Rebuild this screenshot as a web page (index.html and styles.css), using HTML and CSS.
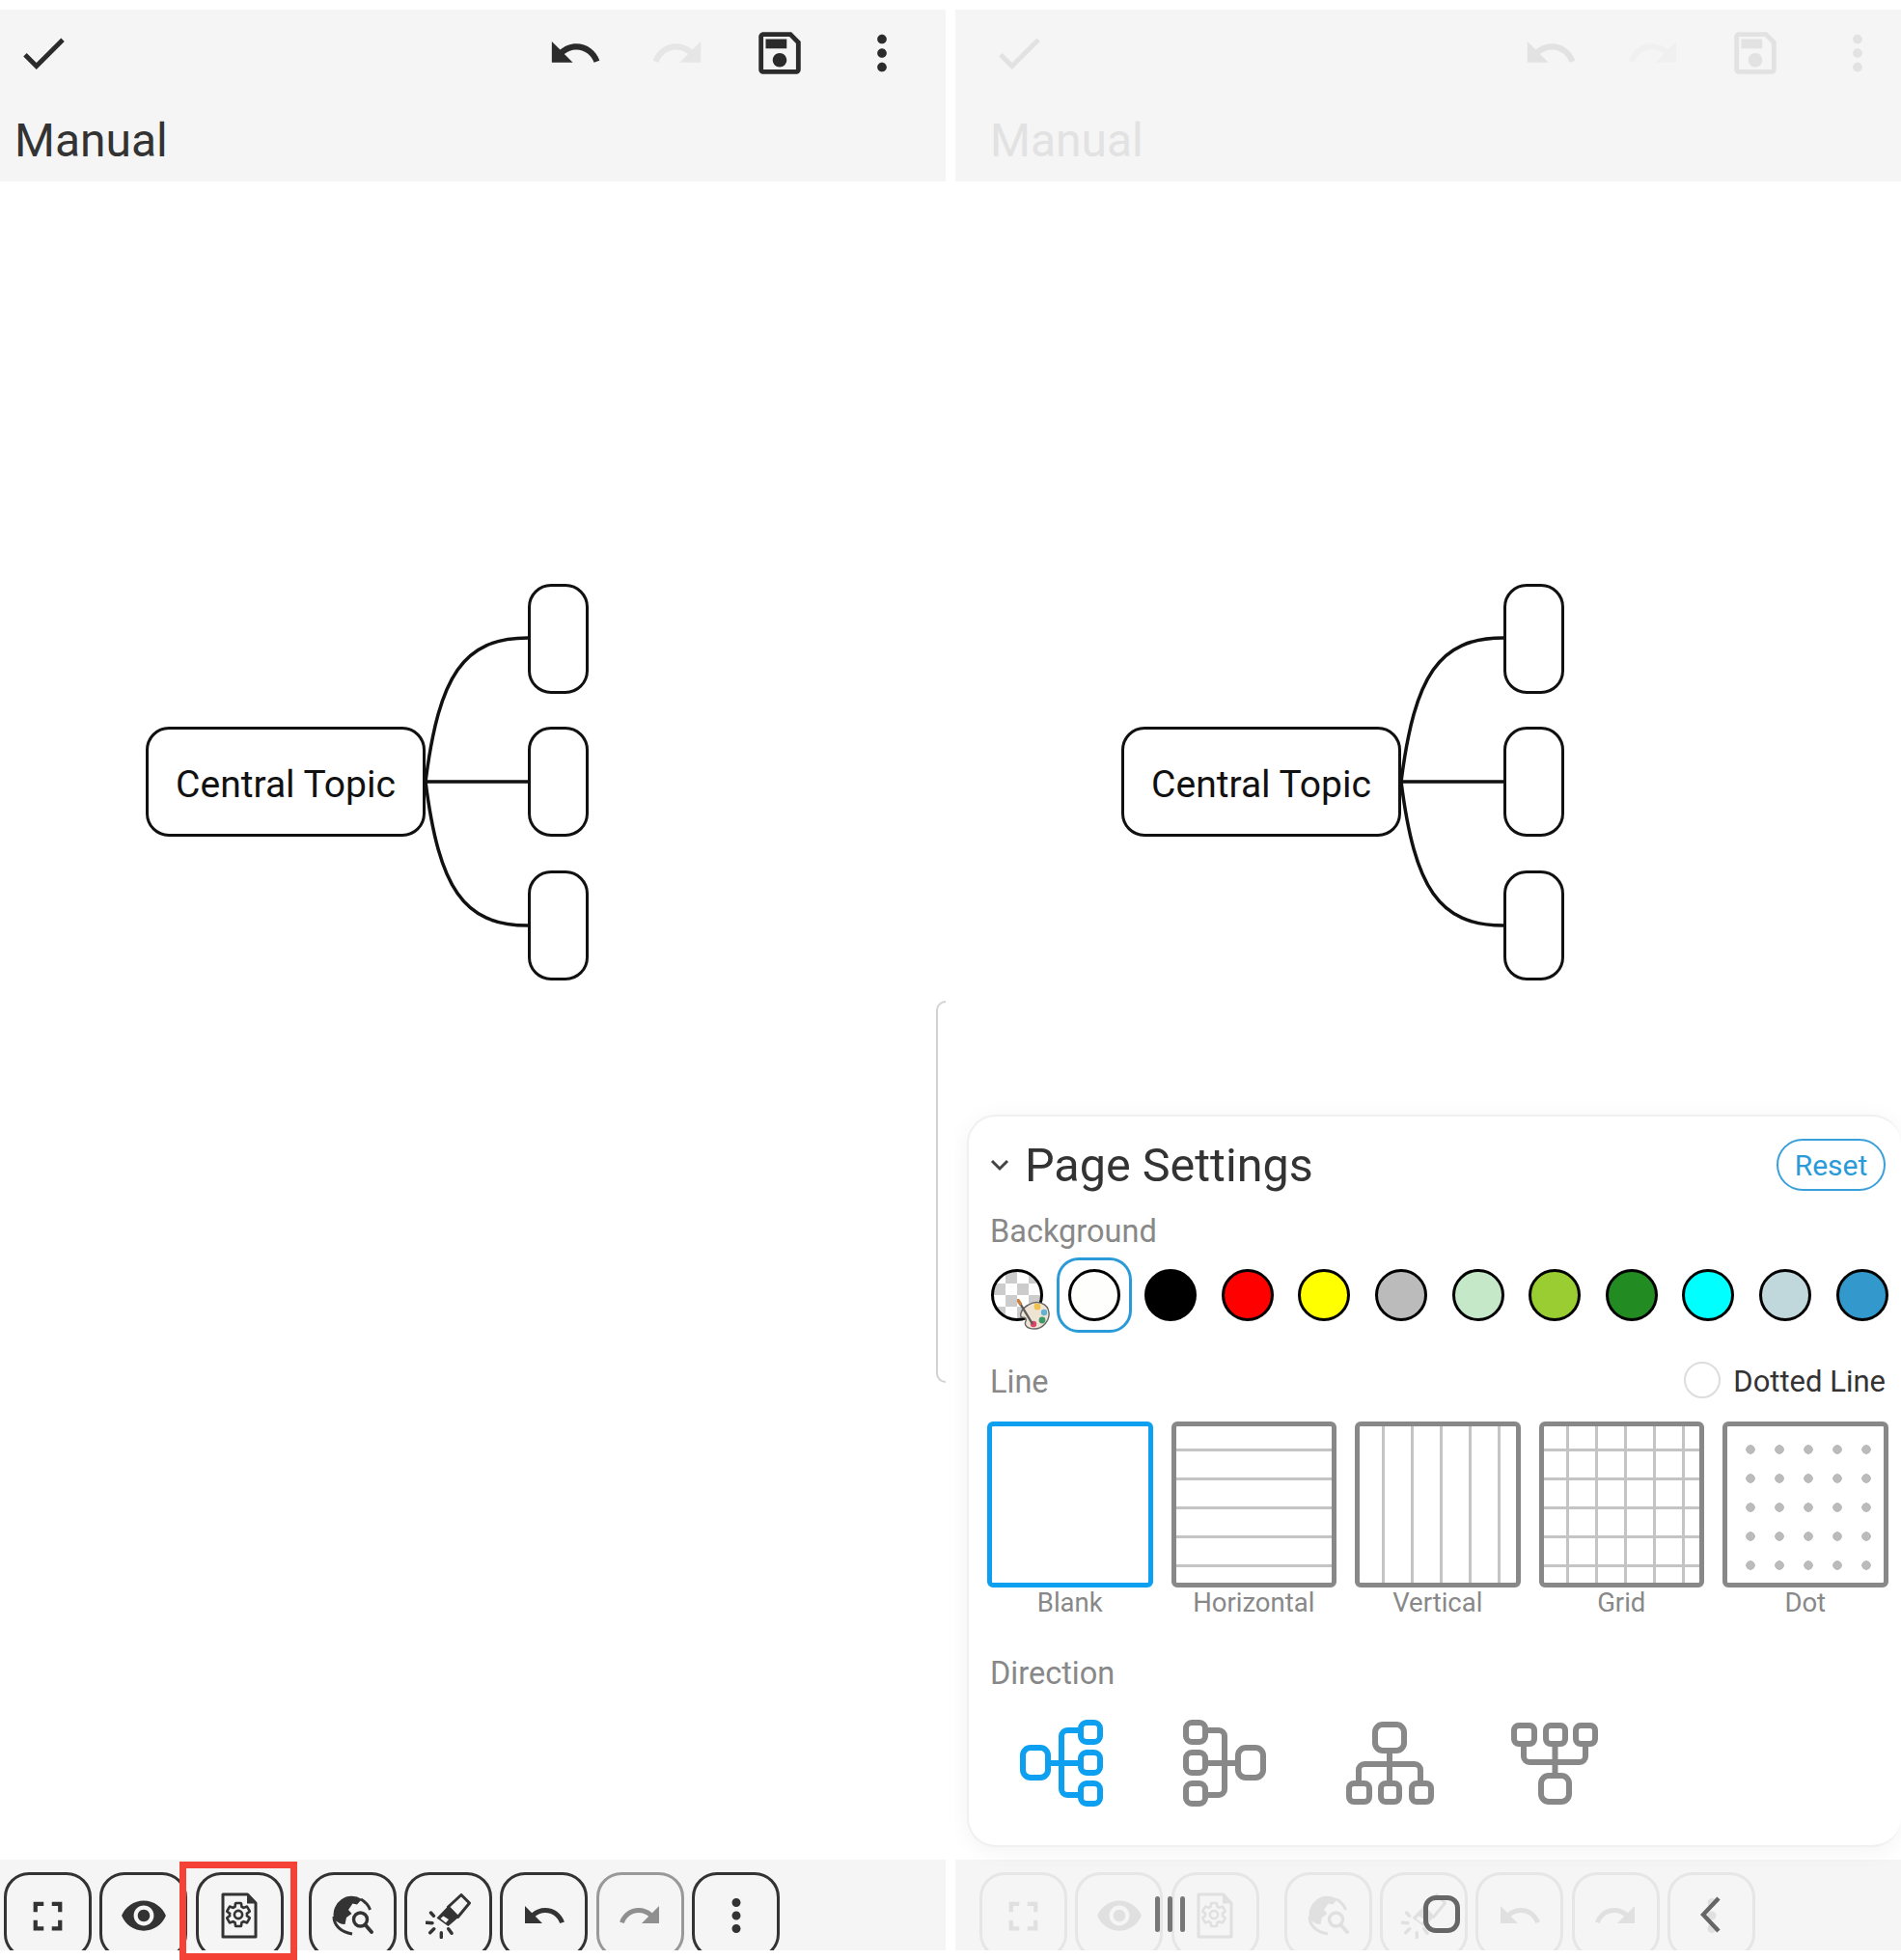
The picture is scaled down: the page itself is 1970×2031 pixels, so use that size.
FILE: index.html
```html
<!DOCTYPE html>
<html lang="en">
<head>
    <meta charset="UTF-8">
    <title>Manual - Page Settings</title>
    <link rel="stylesheet" href="styles.css">
</head>
<body>
    <!-- shared icons -->
    <svg class="sprite" xmlns="http://www.w3.org/2000/svg">
        <symbol id="i-check" viewBox="0 0 24 24"><path d="M9 16.17L4.83 12l-1.42 1.41L9 19 21 7l-1.41-1.41z"/></symbol>
        <symbol id="i-undo" viewBox="0 0 24 24"><path d="M12.5 8c-2.65 0-5.05.99-6.9 2.6L2 7v9h9l-3.62-3.62c1.39-1.16 3.16-1.88 5.12-1.88 3.54 0 6.55 2.31 7.6 5.5l2.37-.78C21.08 11.03 17.15 8 12.5 8z"/></symbol>
        <symbol id="i-redo" viewBox="0 0 24 24"><path d="M18.4 10.6C16.55 8.99 14.15 8 11.5 8c-4.65 0-8.58 3.03-9.96 7.22L3.9 16c1.05-3.19 4.05-5.5 7.6-5.5 1.95 0 3.73.72 5.12 1.88L13 16h9V7z"/></symbol>
        <symbol id="i-save" viewBox="0 0 24 24"><path d="M17 3H5c-1.11 0-2 .9-2 2v14c0 1.1.89 2 2 2h14c1.1 0 2-.9 2-2V7l-4-4zm2 16H5V5h11.17L19 7.83V19zm-7-7c-1.66 0-3 1.34-3 3s1.34 3 3 3 3-1.34 3-3-1.34-3-3-3zM6 6h9v4H6z"/></symbol>
        <symbol id="i-more" viewBox="0 0 24 24"><path d="M12 8c1.1 0 2-.9 2-2s-.9-2-2-2-2 .9-2 2 .9 2 2 2zm0 2c-1.1 0-2 .9-2 2s.9 2 2 2 2-.9 2-2-.9-2-2-2zm0 6c-1.1 0-2 .9-2 2s.9 2 2 2 2-.9 2-2-.9-2-2-2z"/></symbol>
        <symbol id="i-full" viewBox="0 0 24 24"><path d="M7 14H5v5h5v-2H7v-3zm-2-4h2V7h3V5H5v5zm12 7h-3v2h5v-5h-2v3zM14 5v2h3v3h2V5h-5z"/></symbol>
        <symbol id="i-eye" viewBox="0 0 24 24"><path d="M12 4.5C7 4.5 2.73 7.61 1 12c1.73 4.39 6 7.5 11 7.5s9.27-3.11 11-7.5c-1.73-4.39-6-7.5-11-7.5zM12 17c-2.76 0-5-2.24-5-5s2.24-5 5-5 5 2.24 5 5-2.24 5-5 5zm0-8c-1.66 0-3 1.34-3 3s1.34 3 3 3 3-1.34 3-3-1.34-3-3-3z"/></symbol>
        <symbol id="i-doc" viewBox="0 0 38 48">
            <path d="M2 2H27.5L36 11V46H2z" fill="none" stroke="currentColor" stroke-width="3" stroke-linejoin="round"/>
            <path d="M27 3V11.5H35z"/>
            <g transform="translate(3.6 8.6) scale(1.2)" fill="none" stroke="currentColor" stroke-width="2.2">
                <path d="M19.43 12.98c.04-.32.07-.64.07-.98s-.03-.66-.07-.98l2.11-1.65c.19-.15.24-.42.12-.64l-2-3.46c-.12-.22-.39-.3-.61-.22l-2.49 1c-.52-.4-1.08-.73-1.69-.98l-.38-2.65C14.46 2.18 14.25 2 14 2h-4c-.25 0-.46.18-.49.42l-.38 2.65c-.61.25-1.17.59-1.69.98l-2.49-1c-.23-.09-.49 0-.61.22l-2 3.46c-.13.22-.07.49.12.64l2.11 1.65c-.04.32-.07.65-.07.98s.03.66.07.98l-2.11 1.65c-.19.15-.24.42-.12.64l2 3.46c.12.22.39.3.61.22l2.49-1c.52.4 1.08.73 1.69.98l.38 2.65c.03.24.24.42.49.42h4c.25 0 .46-.18.49-.42l.38-2.65c.61-.25 1.17-.59 1.69-.98l2.49 1c.23.09.49 0 .61-.22l2-3.46c.12-.22.07-.49-.12-.64l-2.11-1.65z"/>
                <circle cx="12" cy="12" r="3.4"/>
            </g>
        </symbol>
        <symbol id="i-globe" viewBox="0 0 43 42">
            <path d="M2 24A19 19 0 0 1 31 4L26 9.500 21.500 8.500 17 15 20.500 19 15 23 13.500 30C9 30 5 28 2 24z"/>
            <path d="M2 22C2 31 9 38 21 40" fill="none" stroke="currentColor" stroke-width="3"/>
            <path d="M30 4C35 7 38 10 39.500 15" fill="none" stroke="currentColor" stroke-width="3"/>
            <circle cx="29.500" cy="25" r="7" fill="none" stroke="currentColor" stroke-width="3.400"/>
            <path d="M34.500 30.500L41 38" stroke="currentColor" stroke-width="3.800" stroke-linecap="round"/>
        </symbol>
        <symbol id="i-brush" viewBox="-1 0 47 47">
            <path d="M36 1.500L44.500 10L32.500 24.500L22.500 14z" fill="none" stroke="currentColor" stroke-width="3" stroke-linejoin="round"/>
            <path d="M22.500 13L33.500 24.500L22.500 34L10.500 25.500zM17.500 23.500L14.500 26L20 30.500L23 27z" fill-rule="evenodd"/>
            <path d="M4.500 20L7.500 23.300M0 30.300L6 30.700M3.700 40.700L7.700 36.700M15.300 40.700V45.500M22.700 36.700L26 41.300" fill="none" stroke="currentColor" stroke-width="3.400" stroke-linecap="round"/>
        </symbol>
    </svg>

    <!-- left phone -->
    <div class="phone">
        <div class="toolbar">
            <div class="toolbar-icons">
                <svg class="tool-icon tool-check"><use href="#i-check"/></svg>
                <svg class="tool-icon"><use href="#i-undo"/></svg>
                <svg class="tool-icon tool-off"><use href="#i-redo"/></svg>
                <svg class="tool-icon"><use href="#i-save"/></svg>
                <svg class="tool-icon"><use href="#i-more"/></svg>
            </div>
            <div class="toolbar-title">Manual</div>
        </div>
        <div class="canvas">
            <div class="mindmap">
                <svg class="links" viewBox="0 0 620 900">
                    <path d="M441 622C455 512 480 473 547 473M441 622H547M441 622C455 732 480 771 547 771"/>
                </svg>
                <div class="node node-main">Central Topic</div>
                <div class="node node-sub node-a"></div>
                <div class="node node-sub node-b"></div>
                <div class="node node-sub node-c"></div>
            </div>
            <div class="side-handle"></div>
        </div>
        <div class="bottom-bar">
            <div class="bar-btn"><svg class="bar-full"><use href="#i-full"/></svg></div>
            <div class="bar-btn"><svg class="bar-eye"><use href="#i-eye"/></svg></div>
            <div class="bar-btn"><svg class="bar-doc"><use href="#i-doc"/></svg></div>
            <div class="bar-btn bar-gap"><svg class="bar-globe"><use href="#i-globe"/></svg></div>
            <div class="bar-btn"><svg class="bar-brush"><use href="#i-brush"/></svg></div>
            <div class="bar-btn"><svg class="bar-arrow"><use href="#i-undo"/></svg></div>
            <div class="bar-btn bar-off"><svg class="bar-arrow"><use href="#i-redo"/></svg></div>
            <div class="bar-btn"><svg class="bar-more"><use href="#i-more"/></svg></div>
        </div>
        <div class="highlight"></div>
    </div>

    <!-- right phone, settings open -->
    <div class="phone phone-dim">
        <div class="toolbar">
            <div class="toolbar-icons">
                <svg class="tool-icon tool-check"><use href="#i-check"/></svg>
                <svg class="tool-icon"><use href="#i-undo"/></svg>
                <svg class="tool-icon tool-off"><use href="#i-redo"/></svg>
                <svg class="tool-icon"><use href="#i-save"/></svg>
                <svg class="tool-icon"><use href="#i-more"/></svg>
            </div>
            <div class="toolbar-title">Manual</div>
        </div>
        <div class="canvas">
            <div class="mindmap">
                <svg class="links" viewBox="0 0 620 900">
                    <path d="M441 622C455 512 480 473 547 473M441 622H547M441 622C455 732 480 771 547 771"/>
                </svg>
                <div class="node node-main">Central Topic</div>
                <div class="node node-sub node-a"></div>
                <div class="node node-sub node-b"></div>
                <div class="node node-sub node-c"></div>
            </div>
        </div>
        <div class="bottom-bar">
            <div class="bar-btn"><svg class="bar-full"><use href="#i-full"/></svg></div>
            <div class="bar-btn"><svg class="bar-eye"><use href="#i-eye"/></svg></div>
            <div class="bar-btn"><svg class="bar-doc"><use href="#i-doc"/></svg></div>
            <div class="bar-btn bar-gap"><svg class="bar-globe"><use href="#i-globe"/></svg></div>
            <div class="bar-btn"><svg class="bar-brush"><use href="#i-brush"/></svg></div>
            <div class="bar-btn"><svg class="bar-arrow"><use href="#i-undo"/></svg></div>
            <div class="bar-btn bar-off"><svg class="bar-arrow"><use href="#i-redo"/></svg></div>
            <div class="bar-btn"><svg class="bar-more"><use href="#i-more"/></svg></div>
        </div>

        <div class="panel">
            <div class="panel-header">
                <svg class="panel-chevron" viewBox="0 0 20 13"><path d="M2 2L10 10L18 2"/></svg>
                <div class="panel-title">Page Settings</div>
                <div class="reset-btn">Reset</div>
            </div>

            <div class="section-label label-background">Background</div>
            <div class="swatches">
                <div class="swatch swatch-picker">
                    <svg class="palette" viewBox="0 0 34 32">
                        <path d="M12 6C20 1 32 4 33 14c1 8-6 17-15 17C10 31 7 27 9 23c1-3-1-4-4-4-3-1-1-9 7-13z" fill="#efe3d3" stroke="#666" stroke-width="1.4"/>
                        <circle cx="21" cy="8" r="3.4" fill="#f0c24b"/>
                        <circle cx="28" cy="14" r="3.2" fill="#62b2d6"/>
                        <circle cx="26" cy="22" r="3.4" fill="#3f9a6b"/>
                        <circle cx="17" cy="26" r="3.2" fill="#d9476a"/>
                        <path d="M1 1L16 26" stroke="#5b5b5b" stroke-width="2.4"/>
                        <path d="M0 0L4 6" stroke="#c9813b" stroke-width="3.4"/>
                    </svg>
                </div>
                <div class="swatch swatch-selected swatch-white"></div>
                <div class="swatch swatch-black"></div>
                <div class="swatch swatch-red"></div>
                <div class="swatch swatch-yellow"></div>
                <div class="swatch swatch-grey"></div>
                <div class="swatch swatch-mint"></div>
                <div class="swatch swatch-lime"></div>
                <div class="swatch swatch-green"></div>
                <div class="swatch swatch-cyan"></div>
                <div class="swatch swatch-haze"></div>
                <div class="swatch swatch-blue"></div>
            </div>

            <div class="line-header">
                <div class="section-label">Line</div>
                <div class="dotted-toggle">
                    <span class="radio"></span>
                    <span class="dotted-label">Dotted Line</span>
                </div>
            </div>
            <div class="line-styles">
                <div class="line-style">
                    <div class="line-thumb thumb-active"></div>
                    <div class="line-name">Blank</div>
                </div>
                <div class="line-style">
                    <div class="line-thumb thumb-horizontal"></div>
                    <div class="line-name">Horizontal</div>
                </div>
                <div class="line-style">
                    <div class="line-thumb thumb-vertical"></div>
                    <div class="line-name">Vertical</div>
                </div>
                <div class="line-style">
                    <div class="line-thumb thumb-grid"></div>
                    <div class="line-name">Grid</div>
                </div>
                <div class="line-style">
                    <div class="line-thumb thumb-dot"></div>
                    <div class="line-name">Dot</div>
                </div>
            </div>

            <div class="section-label label-direction">Direction</div>
            <div class="directions">
                <svg class="direction direction-active" viewBox="0 0 92 92">
                    <rect x="6" y="30" width="26" height="31" rx="8"/>
                    <rect x="66" y="4" width="20" height="20" rx="6"/>
                    <rect x="66" y="35" width="20" height="21" rx="6"/>
                    <rect x="66" y="67" width="20" height="21" rx="6"/>
                    <path d="M35 46H63M63 12H52a6 6 0 0 0-6 6V73a6 6 0 0 0 6 6H63"/>
                </svg>
                <svg class="direction" viewBox="0 0 92 92">
                    <g transform="matrix(-1 0 0 1 91 0)">
                        <rect x="6" y="30" width="26" height="31" rx="8"/>
                        <rect x="66" y="4" width="20" height="20" rx="6"/>
                        <rect x="66" y="35" width="20" height="21" rx="6"/>
                        <rect x="66" y="67" width="20" height="21" rx="6"/>
                        <path d="M35 46H63M63 12H52a6 6 0 0 0-6 6V73a6 6 0 0 0 6 6H63"/>
                    </g>
                </svg>
                <svg class="direction" viewBox="0 0 92 92">
                    <rect x="31" y="6" width="30" height="27" rx="8"/>
                    <rect x="4" y="67" width="21" height="19" rx="5"/>
                    <rect x="37" y="67" width="19" height="19" rx="5"/>
                    <rect x="69" y="67" width="20" height="19" rx="5"/>
                    <path d="M46 36V64M14 64V53a6 6 0 0 1 6-6H72a6 6 0 0 1 6 6V64"/>
                </svg>
                <svg class="direction" viewBox="0 0 92 92">
                    <rect x="5" y="7" width="21" height="19" rx="5"/>
                    <rect x="38" y="7" width="20" height="19" rx="5"/>
                    <rect x="69" y="7" width="20" height="19" rx="5"/>
                    <rect x="33" y="59" width="29" height="27" rx="8"/>
                    <path d="M47.5 29V56M15 29V39a6 6 0 0 0 6 6H73a6 6 0 0 0 6-6V29"/>
                </svg>
            </div>
        </div>

        <!-- system navigation keys on top of the bar -->
        <div class="nav-recent"><span></span><span></span><span></span></div>
        <div class="nav-home"></div>
        <svg class="nav-back" viewBox="0 0 22 38"><path d="M19 2L3 19L19 36"/></svg>
    </div>
</body>
</html>
```

FILE: styles.css
```css
* {
    margin: 0;
    padding: 0;
    box-sizing: border-box;
}

body {
    font-family: Roboto, "Noto Sans", sans-serif;
    background: #ffffff;
    color: #333333;
    width: 1970px;
    height: 2031px;
    display: flex;
    gap: 10px;
    overflow: hidden;
}

.sprite {
    display: none;
}

svg {
    fill: currentColor;
    flex-shrink: 0;
}

.phone {
    --shift: 0px;
    position: relative;
    width: 980px;
    height: 2031px;
    padding: 10px 0;
    display: flex;
    flex-direction: column;
    overflow: hidden;
}

.phone-dim {
    --shift: 21px;
}

/* top bar */
.toolbar {
    height: 178px;
    background: #f5f5f5;
    padding: 16px calc(37px - var(--shift)) 0 calc(16px + var(--shift));
}

.toolbar-icons {
    display: flex;
    gap: 48px;
    color: #2b2b2b;
}

.tool-icon {
    width: 58px;
    height: 58px;
}

.tool-check {
    margin-right: auto;
}

.tool-off {
    color: #e6e6e6;
}

.toolbar-title {
    font-size: 48px;
    line-height: 56px;
    margin-top: 34px;
    margin-left: -1px;
    color: #333333;
}

.phone-dim .toolbar-icons,
.phone-dim .toolbar-title {
    color: #e2e2e2;
}

.phone-dim .tool-off {
    color: #f0f0f0;
}

/* mind map */
.canvas {
    position: relative;
    flex: 1;
}

.mindmap {
    position: absolute;
    top: 0;
    left: var(--shift);
    width: 620px;
    height: 900px;
}

.links {
    position: absolute;
    top: 0;
    left: 0;
    width: 620px;
    height: 900px;
    fill: none;
    stroke: #111111;
    stroke-width: 3.5;
}

.node {
    position: absolute;
    background: #ffffff;
    border: 3.5px solid #111111;
    border-radius: 24px;
}

.node-main {
    left: 151px;
    top: 565px;
    width: 290px;
    height: 114px;
    display: flex;
    align-items: center;
    justify-content: center;
    padding-top: 5px;
    font-size: 39px;
    color: #111111;
}

.node-sub {
    left: 547px;
    width: 62.5px;
    height: 114px;
}

.node-a { top: 417px; }
.node-b { top: 565px; }
.node-c { top: 714px; }

.side-handle {
    position: absolute;
    right: 0;
    top: 849px;
    width: 10px;
    height: 396px;
    border: 2px solid #d2d2d2;
    border-right: none;
    border-radius: 14px 0 0 14px;
}

/* bottom bar */
.bottom-bar {
    height: 94px;
    background: #f5f5f5;
    padding: 13px 0 0 calc(4px + var(--shift));
    display: flex;
    gap: 8.3px;
    overflow: hidden;
    flex-shrink: 0;
}

.bar-btn {
    width: 91px;
    height: 90px;
    flex-shrink: 0;
    border: 3px solid #333333;
    border-radius: 26px;
    display: flex;
    align-items: center;
    justify-content: center;
    color: #333333;
}

.bar-gap {
    margin-left: 18px;
}

.bar-off {
    border-color: #999999;
    color: #8f8f8f;
}

.bar-full { width: 51px; height: 51px; }
.bar-eye { width: 50px; height: 50px; }
.bar-doc { width: 38px; height: 48px; }
.bar-globe { width: 43px; height: 42px; }
.bar-brush { width: 47px; height: 47px; }
.bar-arrow { width: 48px; height: 48px; }
.bar-more { width: 54px; height: 54px; }

.phone-dim .bar-btn {
    border-color: #e6e6e6;
    color: #e0e0e0;
}

.highlight {
    position: absolute;
    left: 186px;
    top: 1929px;
    width: 122px;
    height: 102px;
    border: 7px solid #f44336;
}

/* settings panel */
.panel {
    position: absolute;
    left: 12px;
    right: 0;
    top: 1155px;
    height: 759px;
    background: #ffffff;
    border: 2px solid #f0f0f0;
    border-right: none;
    border-radius: 30px;
    box-shadow: 0 4px 24px rgba(0, 0, 0, 0.05);
    padding: 23px 16px 0 22px;
}

.panel-header {
    display: flex;
    align-items: center;
    height: 53px;
}

.panel-chevron {
    width: 20px;
    height: 13px;
    fill: none;
    stroke: #444444;
    stroke-width: 3;
    margin-right: 16px;
    margin-top: 2px;
}

.panel-title {
    font-size: 48.5px;
    line-height: 56px;
    margin-top: 3px;
    color: #333333;
}

.reset-btn {
    margin-left: auto;
    width: 113px;
    height: 54px;
    border: 2px solid #3aa0da;
    border-radius: 27px;
    display: flex;
    align-items: center;
    justify-content: center;
    font-size: 30px;
    padding-top: 1px;
    color: #2a9bd8;
}

.section-label {
    font-size: 32.5px;
    line-height: 36px;
    color: #888888;
}

.label-background {
    margin-top: 25px;
}

.swatches {
    display: flex;
    gap: 25.6px;
    margin: 21px 0 0 1px;
}

.swatch {
    position: relative;
    width: 54px;
    height: 54px;
    flex-shrink: 0;
    border: 3px solid #000000;
    border-radius: 50%;
}

.swatch-picker {
    background: repeating-conic-gradient(#cccccc 0 25%, #ffffff 0 50%) 0 0 / 24px 24px;
}

.swatch-selected::after {
    content: "";
    position: absolute;
    inset: -15px;
    border: 3px solid #2a9bd8;
    border-radius: 23px;
}

.palette {
    position: absolute;
    left: 24px;
    top: 28px;
    width: 34px;
    height: 32px;
}

.swatch-white { background: #fefefc; }
.swatch-black { background: #000000; }
.swatch-red { background: #ff0000; }
.swatch-yellow { background: #ffff00; }
.swatch-grey { background: #bbbbbb; }
.swatch-mint { background: #c4e8c8; }
.swatch-lime { background: #9acd32; }
.swatch-green { background: #228b22; }
.swatch-cyan { background: #00ffff; }
.swatch-haze { background: #c0d8dc; }
.swatch-blue { background: #3399cc; }

.line-header {
    display: flex;
    align-items: center;
    justify-content: space-between;
    height: 38px;
    margin-top: 42px;
}

.line-header .section-label,
.dotted-label {
    padding-top: 3px;
}

.dotted-toggle {
    display: flex;
    align-items: center;
    gap: 13px;
}

.radio {
    width: 38px;
    height: 38px;
    border: 2px solid #dddddd;
    border-radius: 50%;
}

.dotted-label {
    font-size: 31px;
    line-height: 36px;
    color: #333333;
}

.line-styles {
    display: flex;
    gap: 19px;
    margin: 24px 0 0 -3px;
}

.line-style {
    width: 171.5px;
    text-align: center;
}

.line-thumb {
    width: 171.5px;
    height: 172px;
    border: 5px solid #888888;
    border-radius: 6px;
}

.thumb-active {
    border-color: #0ea0f0;
}

.thumb-horizontal {
    background: linear-gradient(#c4c4c4 3px, transparent 3px) 0 23px / 100% 30px;
}

.thumb-vertical {
    background: linear-gradient(90deg, #c4c4c4 3px, transparent 3px) 23px 0 / 30px 100%;
}

.thumb-grid {
    background:
        linear-gradient(#c4c4c4 3px, transparent 3px) 0 23px / 100% 30px,
        linear-gradient(90deg, #c4c4c4 3px, transparent 3px) 23px 0 / 30px 100%;
}

.thumb-dot {
    background: radial-gradient(circle, #bbbbbb 4.5px, transparent 5px) 9px 9px / 30px 30px;
}

.line-name {
    font-size: 27.5px;
    line-height: 30px;
    margin-top: 1px;
    color: #888888;
}

.label-direction {
    margin-top: 40px;
}

.directions {
    display: flex;
    gap: 78px;
    margin: 29px 0 0 28px;
}

.direction {
    width: 92px;
    height: 92px;
    fill: none;
    stroke: #888888;
    stroke-width: 6;
}

.direction-active {
    stroke: #0ea0f0;
}

/* navigation keys */
.nav-recent {
    position: absolute;
    left: 207px;
    top: 1965px;
    display: flex;
    gap: 8px;
}

.nav-recent span {
    width: 5px;
    height: 37px;
    background: #777777;
    border-radius: 3px;
}

.nav-home {
    position: absolute;
    left: 485px;
    top: 1964px;
    width: 38px;
    height: 39px;
    border: 5px solid #666666;
    border-radius: 13px;
}

.nav-back {
    position: absolute;
    left: 772px;
    top: 1965px;
    width: 22px;
    height: 38px;
    fill: none;
    stroke: #666666;
    stroke-width: 4.5;
}
```
